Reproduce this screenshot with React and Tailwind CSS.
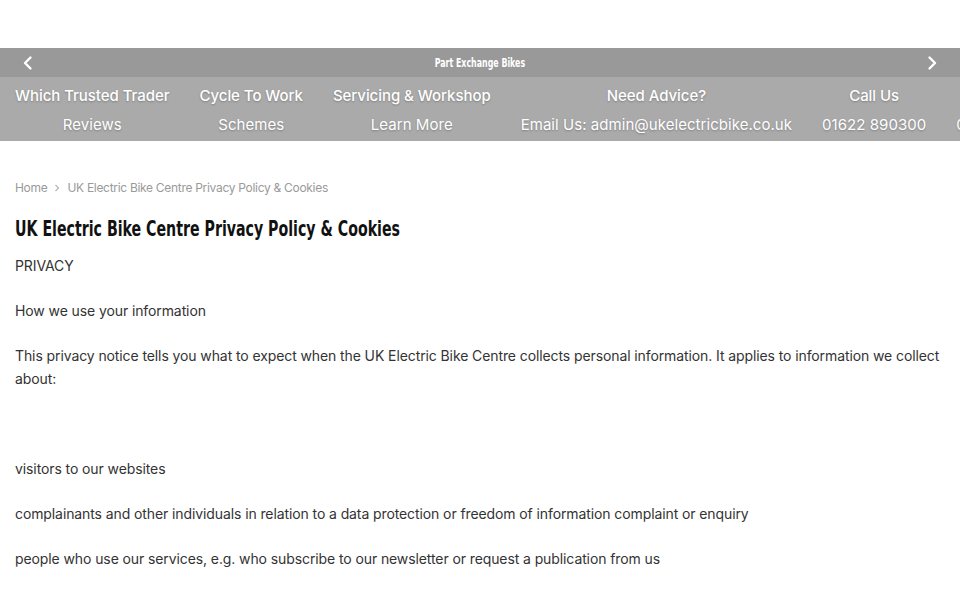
import React from "react";

const navItems = [
  ["Which Trusted Trader", "Reviews"],
  ["Cycle To Work", "Schemes"],
  ["Servicing & Workshop", "Learn More"],
  ["Need Advice?", "Email Us: admin@ukelectricbike.co.uk"],
  ["Call Us", "01622 890300"],
  ["Text Us", "07723 456789"],
];

const Chevron = ({ dir }) => (
  <svg width="14" height="16" viewBox="0 0 14 16" fill="none" stroke="white" strokeWidth="2.4" strokeLinecap="round" strokeLinejoin="round">
    {dir === "left" ? <path d="M9.5 2.5 L4 8 L9.5 13.5" /> : <path d="M4.5 2.5 L10 8 L4.5 13.5" />}
  </svg>
);

export default function App() {
  const body = { fontFamily: "Inter, 'Noto Sans', sans-serif" };
  const cond = { fontFamily: "'DejaVu Sans Condensed', 'DejaVu Sans', sans-serif" };
  return (
    <div className="w-[960px] h-[600px] overflow-hidden bg-white" style={body}>
      <div className="h-[48px] bg-white" />
      <div className="h-[29px] bg-[#999999] flex items-center justify-between px-[21px]">
        <Chevron dir="left" />
        <span className="inline-block text-white text-[12px] font-bold scale-x-[0.73]" style={cond}>Part Exchange Bikes</span>
        <Chevron dir="right" />
      </div>
      <div className="h-[64px] bg-[#aaaaaa] flex whitespace-nowrap overflow-hidden">
        {navItems.map(([a, b]) => (
          <div key={a} className="shrink-0 px-[15px] flex flex-col items-center pt-[9px] text-white [text-shadow:0_1px_2px_rgba(0,0,0,0.25)]">
            <div className="text-[15px] font-medium leading-[20px] tracking-[-0.05px]">{a}</div>
            <div className="text-[15px] leading-[20px] mt-[9px] tracking-[0.05px]">{b}</div>
          </div>
        ))}
      </div>
      <div className="px-[15px]">
        <div className="flex items-center gap-[7px] mt-[39px] text-[12px] text-[#9a9a9a] leading-[16px] tracking-[-0.3px]">
          <span>Home</span>
          <svg width="6" height="8" viewBox="0 0 6 8" fill="none" stroke="#b5b5b5" strokeWidth="1.2"><path d="M1.5 1 L4.5 4 L1.5 7" /></svg>
          <span>UK Electric Bike Centre Privacy Policy &amp; Cookies</span>
        </div>
        <h1 className="mt-[18px] text-[21px] font-bold leading-[30px] text-[#111]" style={cond}>
          <span className="inline-block origin-left scale-x-[0.75] whitespace-nowrap">UK Electric Bike Centre Privacy Policy &amp; Cookies</span>
        </h1>
        <div className="mt-[10px] text-[14px] leading-[23px] text-[#333] tracking-[-0.1px]">
          <p className="mb-[22px]">PRIVACY</p>
          <p className="mb-[22px]">How we use your information</p>
          <p className="mb-[22px]">This privacy notice tells you what to expect when the UK Electric Bike Centre collects personal information. It applies to information we collect about:</p>
          <p className="mb-[22px]">&nbsp;</p>
          <p className="mb-[22px]">visitors to our websites</p>
          <p className="mb-[22px]">complainants and other individuals in relation to a data protection or freedom of information complaint or enquiry</p>
          <p className="mb-[22px]">people who use our services, e.g. who subscribe to our newsletter or request a publication from us</p>
        </div>
      </div>
    </div>
  );
}
